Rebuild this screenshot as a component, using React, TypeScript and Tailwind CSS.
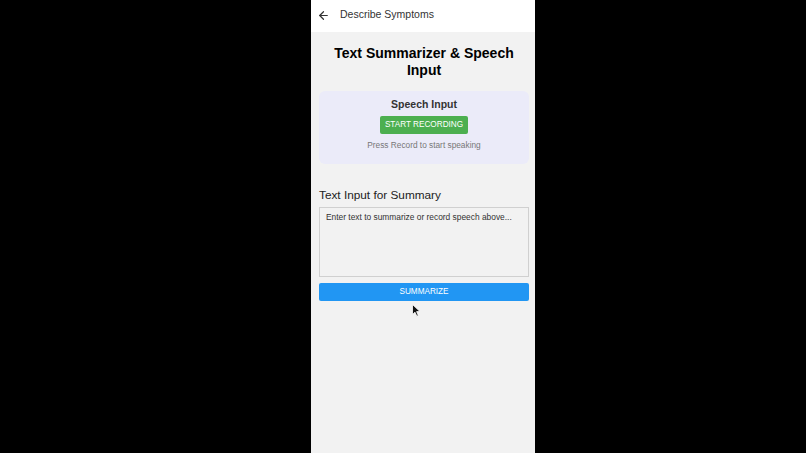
import { ArrowLeft } from "lucide-react";

export default function App() {
  return (
    <div className="relative flex h-[453px] w-[806px] bg-black pl-[311px] font-['Liberation_Sans',Arial,sans-serif]">
      <div className="flex h-full w-[224px] flex-col bg-[#f2f2f2]">
        <header className="flex h-[32px] shrink-0 items-center bg-white pb-[2px] pl-[6px]">
          <ArrowLeft className="h-[13px] w-[13px] text-[#333]" strokeWidth={2.2} />
          <span className="ml-[10px] text-[10.5px] text-[#333]">Describe Symptoms</span>
        </header>

        <div className="flex flex-col pl-[8px] pr-[6px]">
          <h1 className="mt-[13px] text-center text-[14px] font-bold leading-[17px] text-black">
            Text Summarizer &amp; Speech Input
          </h1>

          <section className="mt-[12px] flex flex-col items-center rounded-[6px] bg-[#ebebf9] pb-[13px] pt-[6px]">
            <h2 className="text-[10.5px] font-bold leading-[14px] text-[#333]">Speech Input</h2>
            <button
              type="button"
              className="mt-[5px] h-[18px] rounded-[2px] bg-[#4caf50] px-[5px] text-[8.2px] text-white"
            >
              START RECORDING
            </button>
            <p className="mt-[6px] text-[8.3px] leading-[11px] text-[#777]">Press Record to start speaking</p>
          </section>

          <h3 className="mt-[24px] text-[11.8px] leading-[15px] text-[#222]">Text Input for Summary</h3>

          <div className="mt-[4px] h-[70px] border border-[#d0d0d0] bg-[#f2f2f2] px-[6px] py-[4px]">
            <p className="text-[8.4px] leading-[11px] text-[#333]">Enter text to summarize or record speech above...</p>
          </div>

          <button
            type="button"
            className="mt-[6px] h-[18px] w-full rounded-[2px] bg-[#2196f3] text-[8.2px] text-white"
          >
            SUMMARIZE
          </button>
        </div>
      </div>

      <svg
        className="absolute left-[412px] top-[304px]"
        width="9"
        height="13"
        viewBox="0 0 9 13"
      >
        <path d="M0.5 0.5 L0.5 10.5 L3 8.2 L4.8 12.2 L6.3 11.5 L4.6 7.6 L8 7.6 Z" fill="#111" stroke="#fff" strokeWidth="0.8" />
      </svg>
    </div>
  );
}
